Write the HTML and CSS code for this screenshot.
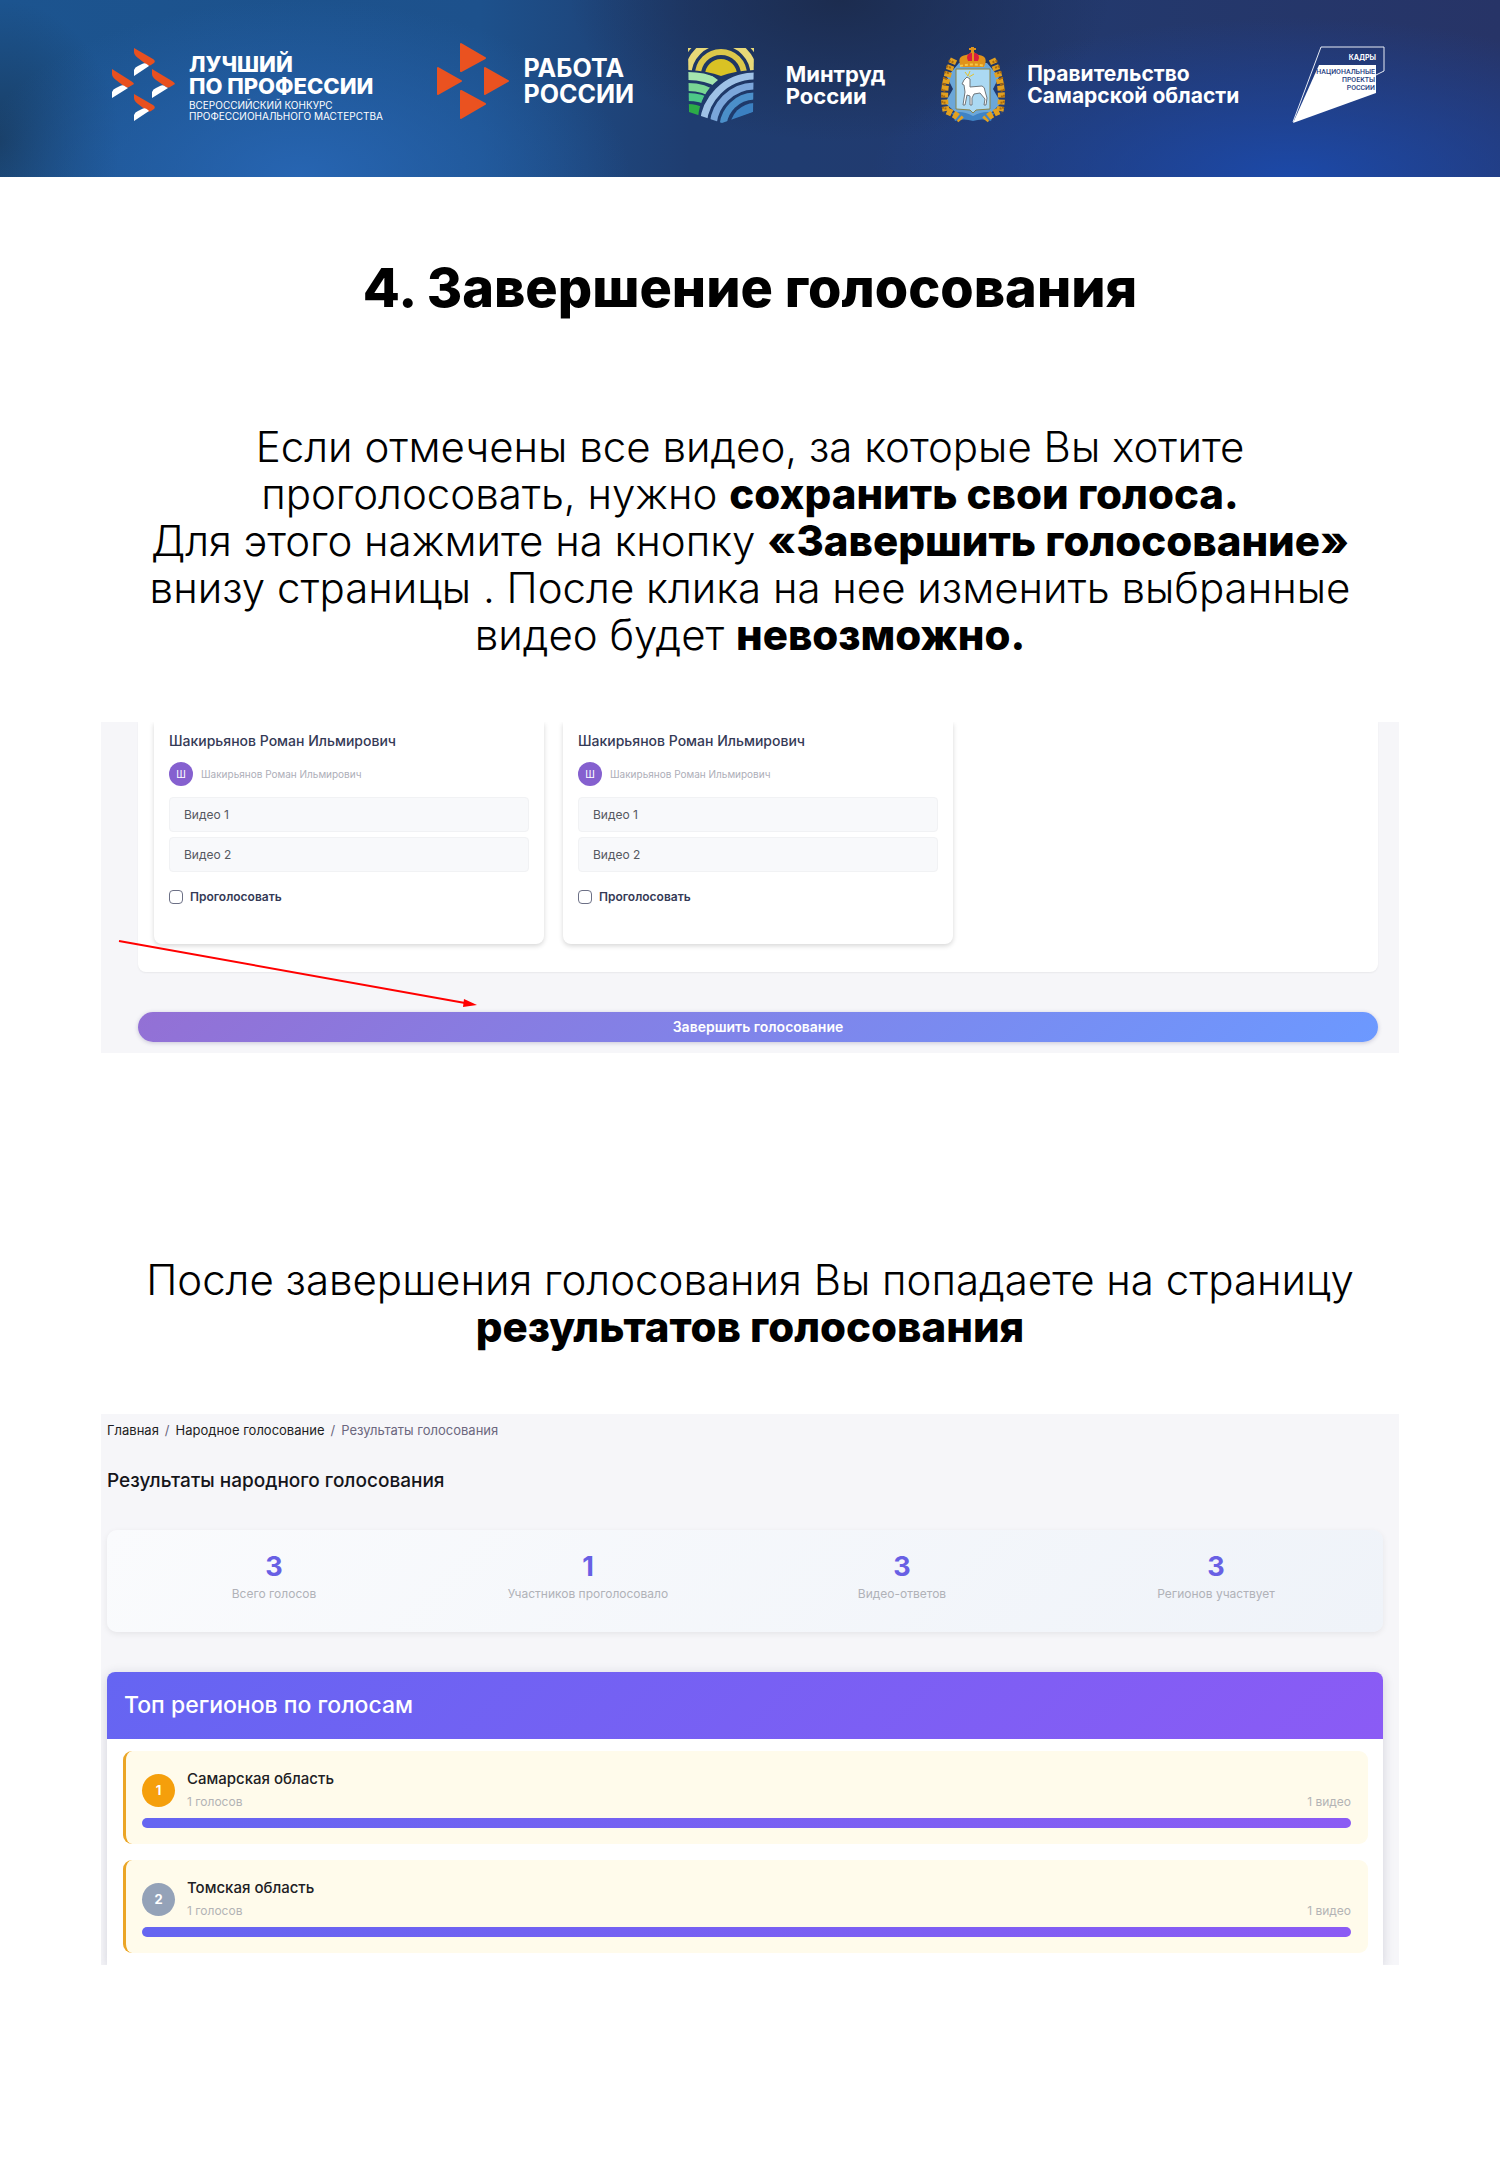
FILE: index.html
```
<!DOCTYPE html>
<html lang="ru">
<head>
  <meta charset="UTF-8" />
  <meta name="viewport" content="width=device-width, initial-scale=1" />
  <title>Завершение голосования</title>
  <link rel="stylesheet" href="styles.css">
</head>
<body>
  <header class="header">
    <div class="logo logo-best">
      <svg width="64" height="74" viewBox="0 0 64 74" aria-hidden="true">
        <g fill="#e8501f">
          <path d="M22 0l19 11q3 2 1 4l-3 2q-2 1-4 0l-9-7q-4-3-4-6z" />
          <path d="M0 21l19 12q3 2 3 3l-5 3q-2 1-4 0l-9-7q-4-3-4-6z" />
          <path d="M40 21l20 12q3 2 3 3l-5 3q-2 1-4 0l-10-7q-4-3-4-6z" />
          <path d="M22 46l19 11q3 2 1 4l-3 2q-2 1-4 0l-9-7q-4-3-4-6z" />
        </g>
        <g fill="#fff">
          <path d="M22 28v-6q1-3 4-4l4-2q3-2 6 1l1 1z" />
          <path d="M0 50v-6q1-3 4-4l4-2q3-2 6 1l2 1z" />
          <path d="M40 50v-6q1-3 4-4l4-2q3-2 6 1l2 1z" />
          <path d="M22 73v-6q1-3 4-4l4-2q3-2 6 1l1 1z" />
        </g>
      </svg>
      <div>
        <div class="best-title">ЛУЧШИЙ<br>ПО ПРОФЕССИИ</div>
        <div class="best-sub">ВСЕРОССИЙСКИЙ КОНКУРС<br>ПРОФЕССИОНАЛЬНОГО МАСТЕРСТВА</div>
      </div>
    </div>

    <div class="logo logo-work">
      <svg width="72" height="76" viewBox="0 0 72 76" aria-hidden="true">
        <g fill="#ea5220" stroke="#ea5220" stroke-width="2" stroke-linejoin="round">
          <path d="M24 1l24 14-24 13z" />
          <path d="M1 25l23 13L1 51z" />
          <path d="M48 25l23 13-23 13z" />
          <path d="M24 48l24 13-24 14z" />
        </g>
      </svg>
      <div class="work-title">РАБОТА<br>РОССИИ</div>
    </div>

    <div class="logo logo-mintrud">
      <svg width="66" height="75" viewBox="0 0 66 75" aria-hidden="true">
        <clipPath id="shield"><path d="M0 0h66l-1 64-31 11L1 64z" /></clipPath>
        <clipPath id="sky"><path d="M0 0h66v22Q46 23 33 28 20 23 0 22z" /></clipPath>
        <clipPath id="field"><path d="M0 22q18 0 30 10Q12 46 10 70L0 66z" /></clipPath>
        <clipPath id="water"><path d="M66 24Q18 26 10 68l24 8 32-12z" /></clipPath>
        <g clip-path="url(#shield)">
          <g clip-path="url(#sky)" fill="none">
            <circle cx="33" cy="27" r="16" fill="#d9c224" />
            <circle cx="33" cy="27" r="23" stroke="#dcc84a" stroke-width="6" />
            <circle cx="33" cy="27" r="33" stroke="#e8d978" stroke-width="7" />
            <circle cx="33" cy="27" r="42" stroke="#e8d978" stroke-width="4" />
          </g>
          <g clip-path="url(#field)" fill="none" stroke-width="8">
            <ellipse cx="0" cy="70" rx="54" ry="42" stroke="#a5e5ae" />
            <ellipse cx="0" cy="70" rx="40" ry="31" stroke="#79d694" />
            <ellipse cx="0" cy="70" rx="32" ry="21" stroke="#4dc888" />
            <ellipse cx="0" cy="70" rx="22" ry="14" fill="#2cac47" stroke="none" />
          </g>
          <g clip-path="url(#water)" fill="none" stroke-width="7">
            <circle cx="67" cy="80" r="52" stroke="#9fc2e6" />
            <circle cx="67" cy="80" r="42" stroke="#7ba6da" />
            <circle cx="67" cy="80" r="32" stroke="#4b8fc9" />
            <circle cx="67" cy="80" r="25" fill="#3b80c1" stroke="none" />
          </g>
        </g>
      </svg>
      <div class="org-title">Минтруд<br>России</div>
    </div>

    <div class="logo logo-samara">
      <svg width="68" height="76" viewBox="0 0 68 76" aria-hidden="true">
        <path d="M20 16L8 30l6 12-8 14 16 14 12 2 14-2 14-14-8-14 6-12-12-14z" fill="#6ba7d9" />
        <path d="M13 66q10-3 21 3 11-6 21-3l-3 8q-9-3-18 0-9-3-18 0z" fill="#3f83c5" />
        <g fill="none" stroke="#e2a01f" stroke-width="7" stroke-dasharray="5 2">
          <path d="M15 12Q2 38 7 64" />
          <path d="M53 12q13 26 8 52" />
          <path d="M8 64q10 4 14 9M60 64q-10 4-14 9" />
        </g>
        <g fill="none" stroke="#a8690f" stroke-width="2" stroke-dasharray="2 4">
          <path d="M14 14Q1 39 7 64M54 14q13 25 7 50" />
          <path d="M11 13Q-1 39 5 66M57 13q12 26 6 53" />
        </g>
        <path d="M17 22h34v40l-14 1-3 3-3-3-14-1z" fill="#abd9f3" stroke="#8a8347" />
        <path d="M22 20q-5-11 5-12 3 0 5-3V3h-2V1h2V0h3v1h2v2h-2v2q2 3 5 3 10 1 5 12z" fill="#e0931b" />
        <path d="M28 11q0-5 5-5v8h-4zM40 11q0-5-5-5v8h4z" fill="#da1f3c" />
        <path d="M21 19q12-3 25 0" fill="none" stroke="#f5c84a" stroke-width="2" stroke-dasharray="3 2" />
        <path d="M26 25l3 4 2-5M30 30l5-3" fill="none" stroke="#e3c22e" stroke-width="1" />
        <path d="M25 33l3-3 3 2v8l12-1q3 1 3 5l2 7-1 7h-2l1-6-5-6-6 1-2 4v7h-2v-9l-3-1-2 10h-2l2-13-1-7-2-1z" fill="#fff" stroke="#70777c" />
      </svg>
      <div class="org-title">Правительство<br>Самарской области</div>
    </div>

    <div class="logo">
      <svg class="national" width="92" height="76" viewBox="0 0 92 76" role="img" aria-label="Национальные проекты России">
        <path d="M0 75L28 0h63v24l-8 4" fill="none" stroke="#e7ebf5" />
        <path d="M0 76L26 18h57v28z" fill="#fff" />
        <text x="83" y="13" class="national-top">КАДРЫ</text>
        <text x="82" y="27" class="national-text">НАЦИОНАЛЬНЫЕ</text>
        <text x="82" y="35" class="national-text">ПРОЕКТЫ</text>
        <text x="82" y="43" class="national-text">РОССИИ</text>
      </svg>
    </div>
  </header>

  <main class="content">
    <h1>4. Завершение голосования</h1>

    <p class="lead">
      Если отмечены все видео, за которые Вы хотите<br>
      проголосовать, нужно <b>сохранить свои голоса.</b><br>
      Для этого нажмите на кнопку <b>«Завершить голосование»</b><br>
      внизу страницы . После клика на нее изменить выбранные<br>
      видео будет <b>невозможно.</b>
    </p>

    <!-- Voting form -->
    <section class="shot voting">
      <div class="panel">
        <article class="card">
          <h3>Шакирьянов Роман Ильмирович</h3>
          <div class="author"><span class="avatar">Ш</span>Шакирьянов Роман Ильмирович</div>
          <div class="video">Видео 1</div>
          <div class="video">Видео 2</div>
          <label class="vote"><input type="checkbox">Проголосовать</label>
        </article>
        <article class="card">
          <h3>Шакирьянов Роман Ильмирович</h3>
          <div class="author"><span class="avatar">Ш</span>Шакирьянов Роман Ильмирович</div>
          <div class="video">Видео 1</div>
          <div class="video">Видео 2</div>
          <label class="vote"><input type="checkbox">Проголосовать</label>
        </article>
      </div>
      <button class="finish" type="button">Завершить голосование</button>
      <svg class="arrow" width="360" height="70" viewBox="0 0 360 70" aria-hidden="true">
        <path d="M1 2l346 62" stroke="#f00" stroke-width="2" />
        <path d="M346 60l13 6-14 2z" fill="#f00" />
      </svg>
    </section>

    <p class="lead lead-results">
      После завершения голосования Вы попадаете на страницу<br>
      <b>результатов голосования</b>
    </p>

    <!-- Results page -->
    <section class="shot results">
      <nav class="crumbs">
        <a href="#">Главная</a><span>/</span><a href="#">Народное голосование</a><span>/</span><span>Результаты голосования</span>
      </nav>
      <h2>Результаты народного голосования</h2>

      <div class="stats">
        <div class="stat"><strong>3</strong>Всего голосов</div>
        <div class="stat"><strong>1</strong>Участников проголосовало</div>
        <div class="stat"><strong>3</strong>Видео-ответов</div>
        <div class="stat"><strong>3</strong>Регионов участвует</div>
      </div>

      <div class="regions">
        <h3>Топ регионов по голосам</h3>
        <div class="region">
          <div class="region-row">
            <span class="place place-first">1</span>
            <div class="region-info">
              <div class="region-name">Самарская область</div>
              <div class="region-meta"><span>1 голосов</span><span>1 видео</span></div>
            </div>
          </div>
          <div class="bar"></div>
        </div>
        <div class="region">
          <div class="region-row">
            <span class="place">2</span>
            <div class="region-info">
              <div class="region-name">Томская область</div>
              <div class="region-meta"><span>1 голосов</span><span>1 видео</span></div>
            </div>
          </div>
          <div class="bar"></div>
        </div>
      </div>
    </section>
  </main>
</body>
</html>
```
FILE: styles.css
```
* {
  box-sizing: border-box;
}

body {
  margin: 0;
  background: #fff;
  color: #000;
  font-family: Inter, "Open Sans", sans-serif;
}

h1, h2, h3, p {
  margin: 0;
}

/* Header */
.header {
  display: flex;
  justify-content: space-between;
  align-items: center;
  padding: 43px 115px 50px 112px;
  color: #fff;
  background:
    radial-gradient(ellipse 28% 90% at 86% 100%, #1c49a8 0%, rgba(28, 73, 168, 0) 100%),
    radial-gradient(ellipse 22% 100% at 20% 100%, #2765b2 0%, rgba(39, 101, 178, 0) 100%),
    radial-gradient(ellipse 8% 80% at 0% 80%, #193e65 0%, rgba(25, 62, 101, 0) 100%),
    radial-gradient(ellipse 18% 80% at 56% 0%, #1c2c4f 0%, rgba(28, 44, 79, 0) 100%),
    linear-gradient(90deg, #1c548f 0%, #1d518c 32%, #1f3d70 46%, #213b70 60%, #273467 100%);
}

.logo {
  display: flex;
  align-items: center;
}

.logo svg {
  display: block;
  overflow: visible;
}

.logo-best {
  align-items: flex-end;
  gap: 13px;
}

.best-title {
  font-size: 22px;
  line-height: 22px;
  font-weight: 800;
}

.best-sub {
  padding-top: 3px;
  font-size: 10px;
  line-height: 11px;
}

.logo-work {
  gap: 15px;
  padding-bottom: 8px;
}

.work-title {
  font-size: 25px;
  line-height: 26px;
  font-weight: 700;
}

.logo-mintrud {
  gap: 32px;
}

.logo-samara {
  gap: 20px;
}

.org-title {
  font-size: 21px;
  line-height: 22px;
  font-weight: 700;
}

.logo-mintrud .org-title {
  font-size: 22px;
}

.national text {
  text-anchor: end;
}

.national-top {
  font-size: 7px;
  font-weight: 700;
  fill: #fff;
}

.national-text {
  font-family: Roboto, Inter, sans-serif;
  font-size: 7px;
  font-weight: 500;
  fill: #27417f;
}

/* Text */
.content {
  padding: 75px 101px 198px;
  text-align: center;
}

h1 {
  font-size: 54px;
  line-height: 72px;
  font-weight: 800;
}

.lead {
  padding-top: 99px;
  font-size: 42px;
  line-height: 47px;
  font-weight: 300;
}

.lead b {
  font-weight: 800;
}

.lead-results {
  padding-top: 203px;
}

.shot {
  position: relative;
  overflow: hidden;
  margin-top: 64px;
  text-align: left;
  background: #f6f6f9;
}

/* Voting form */
.voting {
  padding: 0 21px 11px 37px;
}

.panel {
  display: grid;
  grid-template-columns: repeat(3, 1fr);
  gap: 19px;
  padding: 0 16px 28px;
  background: #fff;
  border-radius: 0 0 8px 8px;
  box-shadow: 0 1px 2px rgba(0, 0, 0, 0.06);
}

.card {
  padding: 8px 15px 38px;
  border-radius: 0 0 8px 8px;
  background: #fff;
  box-shadow: 0 2px 5px rgba(0, 0, 0, 0.16);
}

.card h3 {
  font-size: 14px;
  line-height: 22px;
  font-weight: 500;
  color: #353a56;
}

.author {
  display: flex;
  align-items: center;
  gap: 8px;
  padding: 10px 0 6px;
  font-size: 10px;
  color: #adaeb8;
}

.avatar {
  display: flex;
  align-items: center;
  justify-content: center;
  width: 24px;
  height: 24px;
  border-radius: 50%;
  color: #fff;
  background: #8560cf;
}

.video {
  margin-top: 5px;
  padding: 0 14px;
  border: 1px solid #f1f2f4;
  border-radius: 4px;
  font-size: 12px;
  line-height: 33px;
  color: #55585f;
  background: #f8f9fb;
}

.vote {
  display: flex;
  align-items: center;
  gap: 7px;
  padding-top: 16px;
  font-size: 12px;
  line-height: 18px;
  font-weight: 600;
  color: #353a56;
}

.vote input {
  appearance: none;
  width: 14px;
  height: 14px;
  margin: 0;
  border: 1px solid #6c7086;
  border-radius: 4px;
  background: #fff;
}

.finish {
  display: block;
  width: 100%;
  margin-top: 40px;
  padding: 0;
  border: 0;
  border-radius: 15px;
  font-family: inherit;
  font-size: 14px;
  line-height: 30px;
  font-weight: 600;
  color: #fff;
  background: linear-gradient(135deg, #9370d5 0%, #6c99ff 100%);
  box-shadow: 0 1px 4px rgba(60, 50, 110, 0.25);
}

.arrow {
  position: absolute;
  left: 17px;
  top: 217px;
}

/* Results page */
.results {
  padding: 0 16px 0 6px;
}

.crumbs {
  display: flex;
  gap: 6px;
  padding-top: 6px;
  font-size: 13px;
  line-height: 20px;
  color: #6b677e;
}

.crumbs a {
  color: #1d1d22;
  text-decoration: none;
}

.results h2 {
  padding-top: 28px;
  font-size: 19px;
  line-height: 26px;
  font-weight: 500;
  color: #15151a;
}

.stats {
  display: grid;
  grid-template-columns: repeat(4, 1fr);
  gap: 12px;
  margin-top: 36px;
  padding: 20px 16px 28px;
  border-radius: 10px;
  background: linear-gradient(135deg, #fafbfd 0%, #eff3f9 100%);
  box-shadow: 0 2px 6px rgba(0, 0, 0, 0.07);
}

.stat {
  font-size: 12px;
  line-height: 20px;
  text-align: center;
  color: #b0b2b8;
}

.stat strong {
  display: block;
  font-size: 27px;
  line-height: 34px;
  color: #6860e4;
}

.regions {
  margin-top: 40px;
  padding-bottom: 12px;
  border-radius: 8px 8px 0 0;
  background: #fff;
  box-shadow: 0 2px 12px rgba(30, 30, 70, 0.16);
}

.regions h3 {
  padding: 0 17px;
  border-radius: 8px 8px 0 0;
  font-size: 23px;
  line-height: 67px;
  font-weight: 500;
  color: #fff;
  background: linear-gradient(135deg, #6565f2 0%, #8b5bf5 100%);
}

.region {
  margin: 12px 15px 0 16px;
  padding: 18px 17px 16px 16px;
  border-left: 3px solid #eba525;
  border-radius: 9px;
  background: #fffbeb;
}

.region + .region {
  margin-top: 16px;
}

.region-row {
  display: flex;
  align-items: center;
  gap: 12px;
}

.place {
  width: 33px;
  border-radius: 50%;
  font-size: 13px;
  line-height: 33px;
  font-weight: 700;
  text-align: center;
  color: #fff;
  background: #94a2b8;
}

.place-first {
  background: #f59f0b;
}

.region-info {
  flex: 1;
}

.region-name {
  font-size: 15px;
  line-height: 20px;
  font-weight: 500;
  color: #202024;
}

.region-meta {
  display: flex;
  justify-content: space-between;
  padding-top: 3px;
  font-size: 12px;
  line-height: 20px;
  color: #b3b3b5;
}

.bar {
  height: 10px;
  margin-top: 6px;
  border-radius: 5px;
  background: linear-gradient(90deg, #6565f1 0%, #8b5bf4 100%);
}
```
